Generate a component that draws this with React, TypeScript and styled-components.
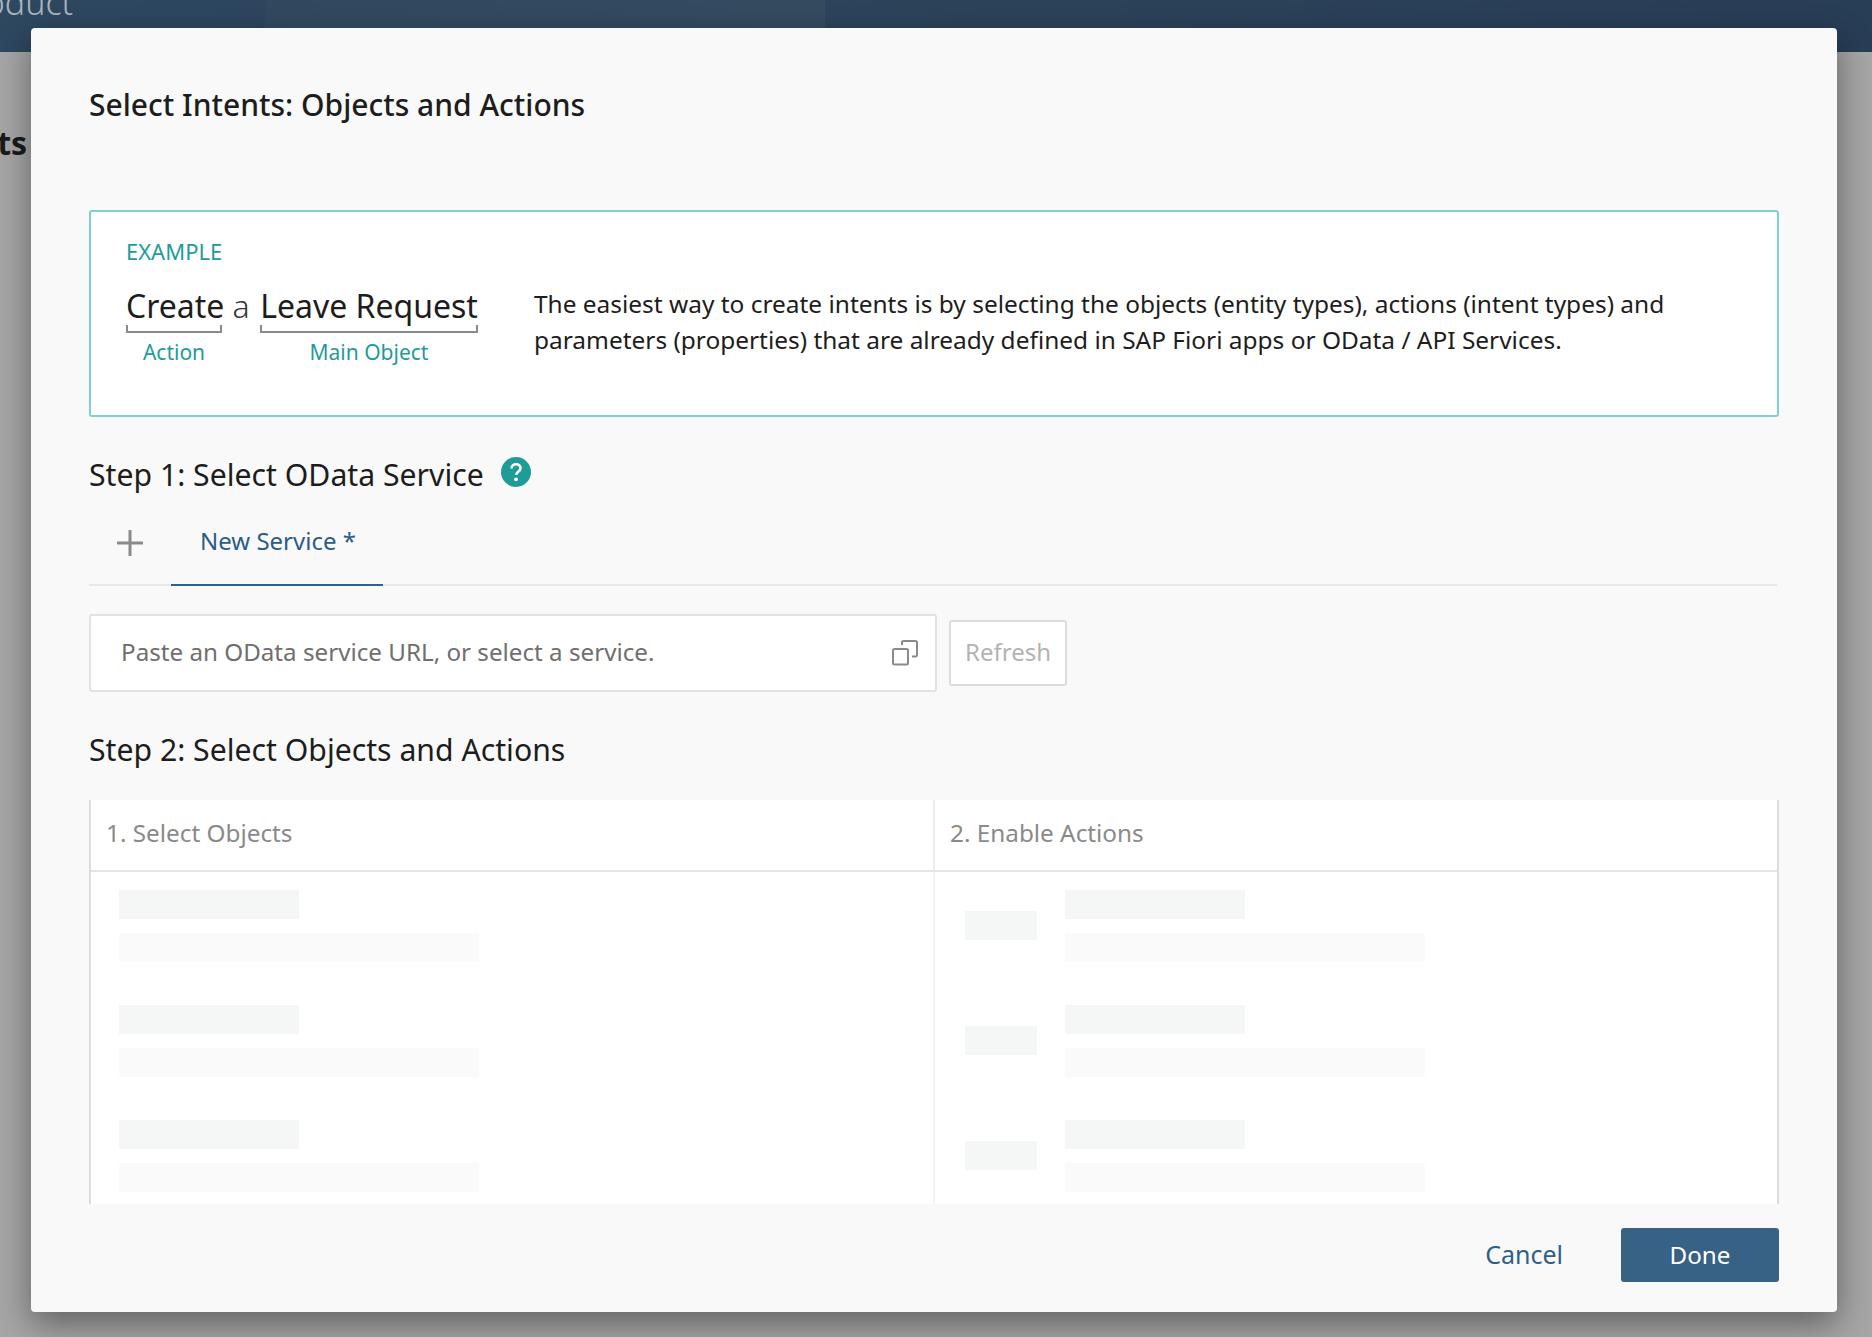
import React from 'react';
import styled, { createGlobalStyle } from 'styled-components';

const GlobalStyle = createGlobalStyle`
  html, body {
    margin: 0;
    padding: 0;
    background: #a6a6a6;
    font-family: "Noto Sans", "Open Sans", Arial, sans-serif;
    color: #1d1d1d;
  }
  * {
    box-sizing: border-box;
  }
`;

const Backdrop = styled.div`
  position: relative;
  height: 1337px;
  overflow: hidden;
  background: #a6a6a6;
`;

const ShellBar = styled.header`
  height: 52px;
  overflow: hidden;
  background:
    radial-gradient(circle at 775px 95px, #35505d 0, #35505d 60px, transparent 61px),
    linear-gradient(90deg, transparent 265px, #31495f 265px, #344c60 825px, transparent 825px),
    linear-gradient(90deg, #2e4860 0, #2c435a 1000px, #283e56 1872px);
`;

const ProductName = styled.div`
  margin: -26px 0 0 -48px;
  font-size: 34px;
  line-height: 56px;
  font-weight: 300;
  color: #aab4bd;
`;

const PageHeading = styled.h1`
  margin: 69px 0 0 -194px;
  font-size: 32px;
  line-height: 44px;
  font-weight: 700;
  color: #1a1a1a;
  white-space: nowrap;
`;

const Dialog = styled.section`
  position: absolute;
  left: 31px;
  top: 28px;
  width: 1806px;
  height: 1284px;
  display: flex;
  flex-direction: column;
  padding: 0 58px;
  background: #f9f9f9;
  border-radius: 4px;
  box-shadow: 0 12px 34px rgba(0, 0, 0, 0.42);
`;

const DialogTitle = styled.h2`
  margin: 57px 0 0;
  font-size: 30px;
  line-height: 40px;
  font-weight: 500;
  color: #1d1d1d;
`;

const ExampleBox = styled.div`
  display: flex;
  height: 207px;
  margin-top: 85px;
  padding: 26px 0 0 35px;
  background: #fff;
  border: 2px solid #7fd0d5;
  border-radius: 3px;
`;

const ExampleLeft = styled.div`
  width: 408px;
  flex: none;
`;

const ExampleLabel = styled.div`
  font-size: 22px;
  line-height: 26px;
  color: #1f9c98;
`;

const Sentence = styled.div`
  display: flex;
  margin-top: 22px;
`;

const Word = styled.div<{ $width: number }>`
  width: ${({ $width }) => $width}px;
  font-size: 32px;
  line-height: 40px;
  color: #1d1d1d;
  white-space: nowrap;
  text-align: center;
`;

const Joiner = styled.div`
  width: 38px;
  font-size: 32px;
  line-height: 40px;
  font-weight: 300;
  text-align: center;
  color: #333;
`;

const Bracket = styled.div`
  height: 8px;
  margin-top: -1px;
  border: 2px solid #8a8a8a;
  border-top: 0;
`;

const WordCaption = styled.div`
  margin-top: 5px;
  font-size: 21px;
  line-height: 28px;
  color: #1f9c98;
`;

const Description = styled.p`
  margin: 48px 0 0;
  width: 1200px;
  font-size: 24.45px;
  line-height: 36px;
  color: #1d1d1d;
`;

const StepHeading = styled.h3<{ $top: number }>`
  display: flex;
  align-items: flex-start;
  margin: ${({ $top }) => $top}px 0 0;
  font-size: 30.2px;
  line-height: 40px;
  font-weight: 400;
  color: #1d1d1d;
`;

const HelpIcon = styled.svg`
  width: 30px;
  height: 30px;
  margin: 2px 0 0 17px;
`;

const TabBar = styled.div`
  display: flex;
  height: 88px;
  margin-right: 2px;
  margin-top: 3px;
  border-bottom: 2px solid #e8e8e8;
`;

const AddTab = styled.div`
  width: 82px;
  flex: none;
  padding: 32px 0 0 28px;
  color: #8a8a8a;
`;

const Tab = styled.div`
  width: 212px;
  height: 88px;
  padding: 26px 0 0 29px;
  font-size: 24px;
  line-height: 34px;
  color: #2c5d87;
  border-bottom: 2px solid #356088;
`;

const ServiceRow = styled.div`
  display: flex;
  align-items: center;
  gap: 12px;
  margin-top: 28px;
`;

const UrlField = styled.div`
  display: flex;
  align-items: center;
  justify-content: space-between;
  width: 848px;
  height: 78px;
  padding: 0 17px 0 30px;
  background: #fff;
  border: 2px solid #e2e2e2;
  border-radius: 3px;
`;

const Placeholder = styled.span`
  margin-bottom: 3px;
  font-size: 24.2px;
  color: #6f6f6f;
`;

const RefreshButton = styled.button`
  width: 118px;
  height: 66px;
  padding: 0 0 3px;
  font: inherit;
  font-size: 24px;
  color: #b3b3b3;
  background: #fff;
  border: 2px solid #dcdcdc;
  border-radius: 3px;
`;

const ObjectsTable = styled.div`
  display: grid;
  grid-template-columns: 842px 1fr;
  grid-template-rows: 72px 1fr;
  height: 404px;
  margin-top: 30px;
  overflow: hidden;
  background: #fff;
  border-left: 2px solid #dcdcdc;
  border-right: 2px solid #dcdcdc;
`;

const ColumnTitle = styled.div<{ $divider?: boolean }>`
  display: flex;
  align-items: center;
  padding-left: 15px;
  padding-bottom: 5px;
  font-size: 24.3px;
  color: #8a8a8a;
  border-bottom: 2px solid #e5e5e5;
  border-left: ${({ $divider }) => ($divider ? '2px solid #ececec' : '0')};
`;

const SkeletonColumn = styled.div<{ $divider?: boolean; $inset: number }>`
  display: flex;
  flex-direction: column;
  gap: 43px;
  padding: 18px 0 0 ${({ $inset }) => $inset}px;
  border-left: ${({ $divider }) => ($divider ? '2px solid #f4f4f4' : '0')};
`;

const SkeletonRow = styled.div`
  display: flex;
  align-items: center;
  gap: 28px;
`;

const SkeletonLines = styled.div`
  display: flex;
  flex-direction: column;
  gap: 14px;
`;

const SkeletonBar = styled.div<{ $wide?: boolean }>`
  width: ${({ $wide }) => ($wide ? 360 : 180)}px;
  height: 29px;
  background: ${({ $wide }) => ($wide ? '#fafafa' : '#f5f6f6')};
`;

const SkeletonBox = styled.div`
  width: 72px;
  height: 29px;
  margin-bottom: 2px;
  background: #f5f6f6;
`;

const Footer = styled.footer`
  display: flex;
  align-items: center;
  justify-content: flex-end;
  gap: 58px;
  margin-top: 24px;
`;

const CancelButton = styled.button`
  padding: 0 0 2px;
  font: inherit;
  font-size: 25px;
  color: #2f5f88;
  background: none;
  border: 0;
`;

const DoneButton = styled.button`
  width: 158px;
  height: 54px;
  padding: 0 0 2px;
  font: inherit;
  font-size: 24.2px;
  color: #fff;
  background: #376285;
  border: 0;
  border-radius: 3px;
`;

const skeletonRows = [0, 1, 2];

function SkeletonList({ withBox }: { withBox?: boolean }) {
  return (
    <SkeletonColumn $divider={withBox} $inset={withBox ? 30 : 28}>
      {skeletonRows.map((row) => (
        <SkeletonRow key={row}>
          {withBox && <SkeletonBox />}
          <SkeletonLines>
            <SkeletonBar />
            <SkeletonBar $wide />
          </SkeletonLines>
        </SkeletonRow>
      ))}
    </SkeletonColumn>
  );
}

export default function App() {
  return (
    <Backdrop>
      <GlobalStyle />
      <ShellBar>
        <ProductName>Product</ProductName>
      </ShellBar>
      <PageHeading>Select Intents</PageHeading>
      <Dialog>
        <DialogTitle>Select Intents: Objects and Actions</DialogTitle>
        <ExampleBox>
          <ExampleLeft>
            <ExampleLabel>EXAMPLE</ExampleLabel>
            <Sentence>
              <Word $width={96}>
                Create
                <Bracket />
                <WordCaption>Action</WordCaption>
              </Word>
              <Joiner>a</Joiner>
              <Word $width={218}>
                Leave Request
                <Bracket />
                <WordCaption>Main Object</WordCaption>
              </Word>
            </Sentence>
          </ExampleLeft>
          <Description>
            The easiest way to create intents is by selecting the objects (entity types), actions (intent types) and
            parameters (properties) that are already defined in SAP Fiori apps or OData / API Services.
          </Description>
        </ExampleBox>
        <StepHeading $top={38}>
          Step 1: Select OData Service
          <HelpIcon viewBox="0 0 30 30">
            <circle cx="15" cy="15" r="15" fill="#1f9c98" />
            <path
              d="M10.5 11.500c0-2.600 2-4.200 4.600-4.200 2.500 0 4.400 1.500 4.400 3.800 0 1.900-1 2.800-2.300 3.700-1.200.8-1.800 1.400-1.800 3"
              fill="none"
              stroke="#fff"
              strokeWidth="2.600"
            />
            <circle cx="15" cy="22.300" r="1.900" fill="#fff" />
          </HelpIcon>
        </StepHeading>
        <TabBar>
          <AddTab>
            <svg width="26" height="26" viewBox="0 0 26 26">
              <path d="M13 0v26M0 13h26" stroke="currentColor" strokeWidth="3" />
            </svg>
          </AddTab>
          <Tab>New Service *</Tab>
        </TabBar>
        <ServiceRow>
          <UrlField>
            <Placeholder>Paste an OData service URL, or select a service.</Placeholder>
            <svg width="26" height="26" viewBox="0 0 26 26" fill="none" stroke="#8a8a8a" strokeWidth="2">
              <rect x="1" y="9" width="15" height="15.500" rx="1.500" />
              <path d="M10 5V2.500A1.500 1.500 0 0 1 11.500 1H23.500A1.500 1.500 0 0 1 25 2.500V15A1.500 1.500 0 0 1 23.500 16.500H20" />
            </svg>
          </UrlField>
          <RefreshButton>Refresh</RefreshButton>
        </ServiceRow>
        <StepHeading $top={38}>Step 2: Select Objects and Actions</StepHeading>
        <ObjectsTable>
          <ColumnTitle>1. Select Objects</ColumnTitle>
          <ColumnTitle $divider>2. Enable Actions</ColumnTitle>
          <SkeletonList />
          <SkeletonList withBox />
        </ObjectsTable>
        <Footer>
          <CancelButton>Cancel</CancelButton>
          <DoneButton>Done</DoneButton>
        </Footer>
      </Dialog>
    </Backdrop>
  );
}
